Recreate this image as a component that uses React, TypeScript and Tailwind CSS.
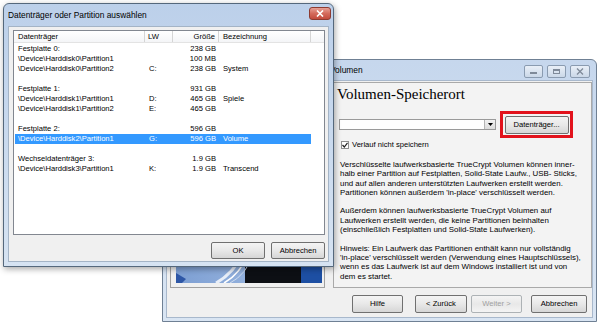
import React from "react";

const rows: { a: string; lw?: string; size?: string; label?: string; sel?: boolean }[] = [
  { a: "Festplatte 0:", size: "238 GB" },
  { a: "\\Device\\Harddisk0\\Partition1", size: "100 MB" },
  { a: "\\Device\\Harddisk0\\Partition2", lw: "C:", size: "238 GB", label: "System" },
  { a: "" },
  { a: "Festplatte 1:", size: "931 GB" },
  { a: "\\Device\\Harddisk1\\Partition1", lw: "D:", size: "465 GB", label: "Spiele" },
  { a: "\\Device\\Harddisk1\\Partition2", lw: "E:", size: "465 GB" },
  { a: "" },
  { a: "Festplatte 2:", size: "596 GB" },
  { a: "\\Device\\Harddisk2\\Partition1", lw: "G:", size: "596 GB", label: "Volume", sel: true },
  { a: "" },
  { a: "Wechseldatenträger 3:", size: "1.9 GB" },
  { a: "\\Device\\Harddisk3\\Partition1", lw: "K:", size: "1.9 GB", label: "Transcend" },
];

function WinButton({ children, className = "", disabled = false }: { children: React.ReactNode; className?: string; disabled?: boolean }) {
  return (
    <div
      className={
        "flex items-center justify-center rounded-[2px] border border-[#707070] bg-gradient-to-b from-[#f4f4f4] via-[#e8e8e8] to-[#d6d6d6] text-[7.6px] leading-none " +
        (disabled ? "text-[#a0a0a0] border-[#adb2b5] from-[#f4f4f4] to-[#f4f4f4]" : "text-black") +
        " " +
        className
      }
    >
      {children}
    </div>
  );
}

function TitleBtn({ children, wide = false }: { children: React.ReactNode; wide?: boolean }) {
  return (
    <div
      className={
        "h-[13px] rounded-[2px] border border-[#8a9bb0] bg-gradient-to-b from-[#e9eff7] to-[#cbd8e8] flex items-center justify-center " +
        (wide ? "w-[20px]" : "w-[19px]")
      }
    >
      {children}
    </div>
  );
}

export default function App() {
  return (
    <div className="relative w-[600px] h-[329px] bg-white overflow-hidden font-['Liberation_Sans',Arial,sans-serif] text-black">
      {/* Background wizard window */}
      <div className="absolute left-[162px] top-[59px] w-[435px] h-[263px] rounded-t-[6px] border border-[#6f8094] bg-gradient-to-b from-[#c6d7ed] to-[#d9e5f3] flex flex-col">
        <div className="h-[20px] flex items-center justify-between pl-[167px] pr-[6px]">
          <span className="text-[8.4px] leading-none text-black whitespace-nowrap">Volumen</span>
          <div className="flex gap-[4px] mt-[2px]">
            <TitleBtn>
              <div className="w-[7px] h-[2px] bg-[#7f8a99] mt-[4px]" />
            </TitleBtn>
            <TitleBtn>
              <div className="w-[7px] h-[5px] border border-[#7f8a99] border-t-2" />
            </TitleBtn>
            <TitleBtn wide>
              <svg width="8" height="7" viewBox="0 0 8 7">
                <path d="M1 0.5 L7 6.5 M7 0.5 L1 6.5" stroke="#7f8a99" strokeWidth="1.3" fill="none" />
              </svg>
            </TitleBtn>
          </div>
        </div>
        <div className="flex-1 mx-[3px] mb-[3px] bg-[#f0f0f0] border border-[#a8b8cc] flex flex-col">
          <div className="mt-[1px] h-[206px] flex">
            {/* graphic */}
            <div className="ml-[3px] w-[155px] h-[206px] border border-[#a0a0a0] pl-[5px] pr-[2px] pt-[4px] pb-[4px] flex">
              <svg className="w-full h-full" viewBox="0 0 146 196" preserveAspectRatio="none">
                <defs>
                  <linearGradient id="lb" x1="0" y1="0" x2="1" y2="0">
                    <stop offset="0" stopColor="#7d9fd3" />
                    <stop offset="1" stopColor="#a9c2e6" />
                  </linearGradient>
                </defs>
                <rect x="0" y="0" width="146" height="196" fill="url(#lb)" />
                <rect x="69" y="0" width="56" height="196" fill="#0d0f14" />
                <rect x="125" y="0" width="21" height="196" fill="#1d4fa3" />
                <path d="M40 196 Q60 185 70 160" stroke="#e8eef8" strokeWidth="3" fill="none" />
                <path d="M48 196 Q66 186 74 162" stroke="#ffffff" strokeWidth="1.5" fill="none" />
                <path d="M54 196 Q70 188 78 166" stroke="#cfdcef" strokeWidth="1" fill="none" />
                <path d="M0 186 L10 192 L6 196 L0 196 Z" fill="#2e57a6" />
              </svg>
            </div>
            {/* panel */}
            <div className="ml-[8px] w-[259px] h-[206px] border border-[#a9a9a9] bg-[#f3f3f3] flex flex-col">
              <div className="ml-[3px] mt-[3px] font-['Liberation_Serif','Times_New_Roman',serif] text-[15px] leading-[16px] whitespace-nowrap">
                Volumen-Speicherort
              </div>
              <div className="mt-[9px] flex items-center">
                <div className="ml-[5px] w-[157px] h-[11px] bg-white border border-[#9a9a9a] flex justify-end">
                  <div className="w-[11px] h-full border-l border-[#b5b5b5] bg-gradient-to-b from-[#f2f2f2] to-[#dcdcdc] flex items-center justify-center">
                    <svg width="5" height="3" viewBox="0 0 5 3">
                      <path d="M0 0 L5 0 L2.5 3 Z" fill="#000" />
                    </svg>
                  </div>
                </div>
                <div className="ml-[4px] w-[73px] h-[27px] border-[3px] border-[#e2121c] flex items-center justify-center">
                  <WinButton className="w-[64px] h-[18px]">Datenträger...</WinButton>
                </div>
              </div>
              <div className="mt-[2px] h-[10px] flex items-center">
                <div className="ml-[7px] w-[8px] h-[8px] border border-[#8f8f8f] bg-white flex items-center justify-center">
                  <svg width="6" height="6" viewBox="0 0 6 6">
                    <path d="M0.5 3 L2.3 5 L5.5 0.8" stroke="#222" strokeWidth="1.2" fill="none" />
                  </svg>
                </div>
                <span className="ml-[3px] text-[7.6px] leading-none whitespace-nowrap">Verlauf nicht speichern</span>
              </div>
              <div className="mt-[10px] ml-[6px] text-[7.9px] leading-[9.3px] whitespace-nowrap flex flex-col gap-[9.3px]">
                <div>
                  <div>Verschlüsselte laufwerksbasierte TrueCrypt Volumen können inner-</div>
                  <div>halb einer Partition auf Festplatten, Solid-State Laufw., USB- Sticks,</div>
                  <div>und auf allen anderen unterstützten Laufwerken erstellt werden.</div>
                  <div>Partitionen können außerdem 'in-place' verschlüsselt werden.</div>
                </div>
                <div>
                  <div>Außerdem können laufwerksbasierte TrueCrypt Volumen auf</div>
                  <div>Laufwerken erstellt werden, die keine Partitionen beinhalten</div>
                  <div>(einschließlich Festplatten und Solid-State Laufwerken).</div>
                </div>
                <div>
                  <div>Hinweis: Ein Laufwerk das Partitionen enthält kann nur vollständig</div>
                  <div>'in-place' verschlüsselt werden (Verwendung eines Hauptschlüssels),</div>
                  <div>wenn es das Laufwerk ist auf dem Windows installiert ist und von</div>
                  <div>dem es startet.</div>
                </div>
              </div>
            </div>
          </div>
          <div className="mt-[7px] flex">
            <WinButton className="ml-[185px] w-[51px] h-[18px]">Hilfe</WinButton>
            <WinButton className="ml-[12px] w-[52px] h-[18px]">&lt; Zurück</WinButton>
            <WinButton disabled className="ml-[4px] w-[51px] h-[18px]">Weiter &gt;</WinButton>
            <WinButton className="ml-[9px] w-[56px] h-[18px]">Abbrechen</WinButton>
          </div>
        </div>
      </div>

      {/* Front dialog */}
      <div className="absolute left-[3px] top-[3px] w-[331px] h-[264px] rounded-t-[6px] border border-[#55687c] bg-gradient-to-b from-[#bcd0ea] to-[#d6e3f2] shadow-[1px_2px_6px_rgba(0,0,0,0.35)] flex flex-col">
        <div className="h-[22px] flex items-start justify-between pl-[4px] pr-[2px]">
          <span className="mt-[6px] text-[8.4px] leading-[10px] whitespace-nowrap">Datenträger oder Partition auswählen</span>
          <div className="mt-[3px] w-[22px] h-[13px] rounded-[3px] border border-[#8d3b31] bg-gradient-to-b from-[#e6a096] via-[#d46a5c] to-[#c24a3c] flex items-center justify-center">
            <svg width="8" height="7" viewBox="0 0 8 7">
              <path d="M1 0.5 L7 6.5 M7 0.5 L1 6.5" stroke="#ffffff" strokeWidth="1.6" fill="none" />
            </svg>
          </div>
        </div>
        <div className="flex-1 mx-[4px] mb-[4px] bg-[#f0f0f0] border border-[#a4b4c6] flex flex-col">
          <div className="ml-[4px] mt-[3px] w-[312px] h-[205px] bg-white border border-[#828790] flex flex-col text-[7.6px] leading-none">
            <div className="h-[12px] flex items-stretch border-b border-[#e3e3e3] bg-gradient-to-b from-white to-[#f4f5f7]">
              <div className="w-[131px] border-r border-[#d5d5d5] flex items-center pl-[4px]">Datenträger</div>
              <div className="w-[28px] border-r border-[#d5d5d5] flex items-center pl-[3px]">LW</div>
              <div className="w-[46px] border-r border-[#d5d5d5] flex items-center justify-end pr-[3px]">Größe</div>
              <div className="w-[92px] border-r border-[#d5d5d5] flex items-center pl-[4px]">Bezeichnung</div>
              <div className="flex-1" />
            </div>
            <div className="mt-[1px] flex flex-col">
              {rows.map((r, i) => (
                <div
                  key={i}
                  className={
                    "ml-[1px] w-[296px] h-[10px] flex items-center whitespace-nowrap " +
                    (r.sel ? "bg-[#3399ff] text-white" : "")
                  }
                >
                  <div className="w-[130px] pl-[3px]">{r.a}</div>
                  <div className="w-[28px] pl-[4px]">{r.lw ?? ""}</div>
                  <div className="w-[46px] text-right pr-[3px]">{r.size ?? ""}</div>
                  <div className="w-[92px] pl-[4px]">{r.label ?? ""}</div>
                </div>
              ))}
            </div>
          </div>
          <div className="mt-[7px] flex justify-end pr-[3px] gap-[6px]">
            <WinButton className="w-[54px] h-[17px]">OK</WinButton>
            <WinButton className="w-[54px] h-[17px]">Abbrechen</WinButton>
          </div>
        </div>
      </div>
    </div>
  );
}
